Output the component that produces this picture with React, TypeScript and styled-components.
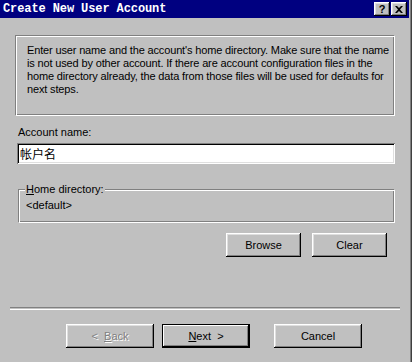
import React from 'react'
import styled, { createGlobalStyle } from 'styled-components'

const face = '#c0c0c0'
const shadow = '#808080'
const light = '#dfdfdf'

const GlobalStyle = createGlobalStyle`
  html, body {
    margin: 0;
    padding: 0;
    background: ${face};
  }
  body {
    font-family: 'Liberation Sans', Arial, sans-serif;
    font-size: 11px;
    color: #000;
  }
`

const Window = styled.div`
  width: 412px;
  height: 362px;
  box-sizing: border-box;
  background: ${face};
  border-right: 1px solid #404040;
  overflow: hidden;
`

const Frame = styled.div`
  height: 100%;
  border-right: 1px solid ${shadow};
  padding-right: 1px;
  display: flex;
  flex-direction: column;
`

const TitleBar = styled.div`
  height: 18px;
  flex: none;
  background: #000080;
  display: flex;
  align-items: center;
  padding: 0 2px 0 3px;
`

const Title = styled.div`
  flex: 1;
  color: #fff;
  font-family: 'Liberation Mono', 'Courier New', monospace;
  font-weight: bold;
  font-size: 12px;
  line-height: 18px;
  letter-spacing: -0.1px;
`

const CaptionButton = styled.div<{ gap?: number }>`
  width: 16px;
  height: 14px;
  margin-left: ${p => p.gap ?? 0}px;
  background: ${face};
  box-sizing: border-box;
  box-shadow: inset -1px -1px #000, inset 1px 1px #fff, inset -2px -2px ${shadow},
    inset 2px 2px ${light};
  display: flex;
  align-items: center;
  justify-content: center;
  font-family: 'Liberation Sans', Arial, sans-serif;
  font-weight: bold;
  font-size: 11px;
  line-height: 14px;
`

const Content = styled.div`
  flex: 1;
  padding-top: 17px;
`

const Etched = styled.div`
  box-sizing: border-box;
  border-top: 1px solid ${shadow};
  border-left: 1px solid ${shadow};
  border-bottom: 1px solid #fff;
  border-right: 1px solid #fff;
  box-shadow: inset 1px 1px #fff, inset -1px -1px ${shadow};
`

const InfoBox = styled(Etched)`
  margin-left: 15px;
  width: 380px;
  height: 81px;
  padding: 8px 0 0 11px;
  line-height: 13px;
  white-space: nowrap;
  letter-spacing: -0.15px;
`

const Label = styled.div`
  margin: 10px 0 0 18px;
  line-height: 13px;
`

const TextInput = styled.input`
  display: block;
  margin: 4px 0 0 17px;
  width: 378px;
  height: 21px;
  box-sizing: border-box;
  border: none;
  outline: none;
  padding: 0 0 0 3px;
  background: #fff;
  box-shadow: inset 1px 1px ${shadow}, inset -1px -1px #fff, inset 2px 2px #000,
    inset -2px -2px ${light};
  font-family: 'Noto Sans CJK SC', 'Liberation Sans', sans-serif;
  font-size: 12px;
  color: #000;
`

const GroupBox = styled(Etched)`
  position: relative;
  margin: 25px 0 0 18px;
  width: 377px;
  height: 34px;
  padding: 9px 0 0 7px;
  line-height: 13px;
`

const Legend = styled.span`
  position: absolute;
  top: -7px;
  left: 6px;
  padding: 0 1px;
  background: ${face};
  line-height: 13px;
`

const ButtonRow = styled.div<{ top: number }>`
  display: flex;
  margin-top: ${p => p.top}px;
`

const Button = styled.button<{ isDefault?: boolean; wide?: boolean; push?: number }>`
  width: ${p => (p.wide ? 88 : 75)}px;
  height: 24px;
  margin-left: ${p => p.push ?? 0}px;
  padding: 0;
  border: none;
  background: ${face};
  font-family: 'Liberation Sans', Arial, sans-serif;
  font-size: 11px;
  color: #000;
  box-shadow: ${p =>
    p.isDefault
      ? `inset 0 0 0 1px #000, inset -2px -2px #000, inset 2px 2px #fff, inset -3px -3px ${shadow}`
      : `inset -1px -1px #000, inset 1px 1px #fff, inset -2px -2px ${shadow}, inset 2px 2px ${light}`};
  &:disabled {
    color: ${shadow};
    text-shadow: 1px 1px #fff;
  }
`

const Separator = styled.div`
  margin: 50px 9px 0 10px;
  height: 1px;
  border-top: 1px solid ${shadow};
  border-bottom: 1px solid #fff;
`

const CloseGlyph = () => (
  <svg width="8" height="7" viewBox="0 0 8 7">
    <path d="M0 0h2l2 2 2-2h2L5 3.5 8 7H6L4 5 2 7H0l3-3.5z" fill="#000" />
  </svg>
)

const infoLines = [
  "Enter user name and the account's home directory. Make sure that the name",
  'is not used by other account. If there are account configuration files in the',
  'home directory already, the data from those files will be used for defaults for',
  'next steps.',
]

export default function App() {
  return (
    <Window>
      <GlobalStyle />
      <Frame>
        <TitleBar>
          <Title>Create New User Account</Title>
          <CaptionButton>?</CaptionButton>
          <CaptionButton gap={1}>
            <CloseGlyph />
          </CaptionButton>
        </TitleBar>
        <Content>
          <InfoBox>
            {infoLines.map((line, i) => (
              <div key={i}>{line}</div>
            ))}
          </InfoBox>
          <Label>Account name:</Label>
          <TextInput defaultValue="帐户名" />
          <GroupBox>
            <Legend>
              <u>H</u>ome directory:
            </Legend>
            &lt;default&gt;
          </GroupBox>
          <ButtonRow top={10}>
            <Button push={226}>Browse</Button>
            <Button push={11}>Clear</Button>
          </ButtonRow>
          <Separator />
          <ButtonRow top={14}>
            <Button wide push={66} disabled>
              &lt;&nbsp;&nbsp;<u>B</u>ack
            </Button>
            <Button wide isDefault push={8}>
              <u>N</u>ext&nbsp;&nbsp;&gt;
            </Button>
            <Button wide push={24}>
              Cancel
            </Button>
          </ButtonRow>
        </Content>
      </Frame>
    </Window>
  )
}
